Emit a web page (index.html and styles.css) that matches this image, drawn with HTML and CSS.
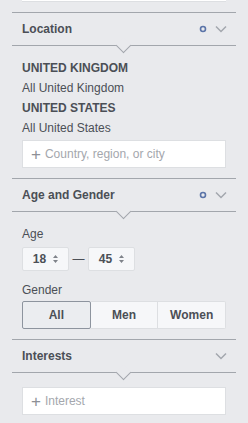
FILE: index.html
```html
<!DOCTYPE html>
<html>
<head>
<title>Audience</title>
<link rel="stylesheet" href="styles.css">
</head>
<body>

<div class="panel">
  <div class="tail"></div>

  <!-- LOCATION -->
  <div class="section">
    <div class="head">
      <span>Location</span>
      <span class="tools">
        <svg width="8" height="8" viewBox="0 0 8 8"><circle cx="4" cy="4" r="2.5" fill="none" stroke="#5b74a8" stroke-width="1.6"/></svg>
        <svg width="12" height="8" viewBox="0 0 12 8"><path d="M1 1.5 L6 6.5 L11 1.5" fill="none" stroke="#a3a7ae" stroke-width="1.5"/></svg>
      </span>
    </div>
    <div class="body">
      <div class="row strong">UNITED KINGDOM</div>
      <div class="row">All United Kingdom</div>
      <div class="row strong">UNITED STATES</div>
      <div class="row">All United States</div>
      <div class="field"><span class="plus">+</span>Country, region, or city</div>
    </div>
  </div>

  <!-- AGE AND GENDER -->
  <div class="section">
    <div class="head">
      <span>Age and Gender</span>
      <span class="tools">
        <svg width="8" height="8" viewBox="0 0 8 8"><circle cx="4" cy="4" r="2.5" fill="none" stroke="#5b74a8" stroke-width="1.6"/></svg>
        <svg width="12" height="8" viewBox="0 0 12 8"><path d="M1 1.5 L6 6.5 L11 1.5" fill="none" stroke="#a3a7ae" stroke-width="1.5"/></svg>
      </span>
    </div>
    <div class="body">
      <div class="label">Age</div>
      <div class="ages">
        <div class="select">18 <svg width="5" height="8" viewBox="0 0 5 8"><path d="M0 3 L2.5 0 L5 3 Z M0 5 L2.5 8 L5 5 Z" fill="#7f838a"/></svg></div>
        <span class="dash">&mdash;</span>
        <div class="select">45 <svg width="5" height="8" viewBox="0 0 5 8"><path d="M0 3 L2.5 0 L5 3 Z M0 5 L2.5 8 L5 5 Z" fill="#7f838a"/></svg></div>
      </div>
      <div class="label gap">Gender</div>
      <div class="segments">
        <div class="seg active">All</div>
        <div class="seg">Men</div>
        <div class="seg">Women</div>
      </div>
    </div>
  </div>

  <!-- INTERESTS -->
  <div class="section">
    <div class="head">
      <span>Interests</span>
      <span class="tools">
        <svg width="12" height="8" viewBox="0 0 12 8"><path d="M1 1.5 L6 6.5 L11 1.5" fill="none" stroke="#a3a7ae" stroke-width="1.5"/></svg>
      </span>
    </div>
    <div class="body last">
      <div class="field"><span class="plus">+</span>Interest</div>
    </div>
  </div>
</div>

</body>
</html>
```
FILE: styles.css
```css
body {margin:0; font-family:"Liberation Sans", Arial, sans-serif; font-size:12px; background:#e9eaed; color:#4b4f56;}
.panel {padding:0 12px;}

.tail {
  height:1px; margin:0 10px 10px 10px;
  background:#fff; border-bottom:1px solid #dddfe2;
}

.section {border-top:1px solid #a2a6ac;}

.head {
  position:relative;
  height:32px; padding:0 9px 0 10px;
  display:flex; align-items:center; justify-content:space-between;
  border-bottom:1px solid #a2a6ac;
  font-weight:bold; font-size:12px;
}
.head::after {
  content:""; position:absolute;
  left:50%; bottom:-6px; margin-left:-6px;
  width:10px; height:10px;
  background:#e9eaed;
  border-right:1px solid #a2a6ac; border-bottom:1px solid #a2a6ac;
  transform:rotate(45deg);
}
.tools {display:flex; align-items:center; gap:8px;}
.tools svg {display:block;}

.body {padding:12px 10px 10px 10px;}
.body.last {padding-top:12px;}
.row {line-height:20px;}
.strong {font-weight:bold;}

.field {
  margin-top:2px; height:26px;
  background:#fff; border:1px solid #dddfe2;
  display:flex; align-items:center;
  padding:0 8px; color:#a4a7ad;
}
.plus {font-size:17px; color:#8d9096; margin-right:4px; line-height:1;}

.label {line-height:20px; font-size:12px;}
.label.gap {margin-top:9px;}

.ages {display:flex; align-items:center; margin-top:3px;}
.select {
  width:45px; height:22px;
  background:#f6f7f9; border:1px solid #dddfe2; border-radius:2px;
  display:flex; align-items:center; justify-content:center; gap:7px;
  color:#4b4f56; font-weight:bold;
}
.dash {width:19px; text-align:center; color:#4b4f56;}

.segments {
  display:flex; margin-top:1px; height:28px;
}
.seg {
  flex:1; display:flex; align-items:center; justify-content:center;
  background:#f6f7f9; border:1px solid #dddfe2; border-left:none;
  font-weight:bold;
}
.seg:last-child {border-radius:0 2px 2px 0;}
.seg.active {
  background:#ebedf0; border:1px solid #8d949e; border-radius:2px;
}
```
